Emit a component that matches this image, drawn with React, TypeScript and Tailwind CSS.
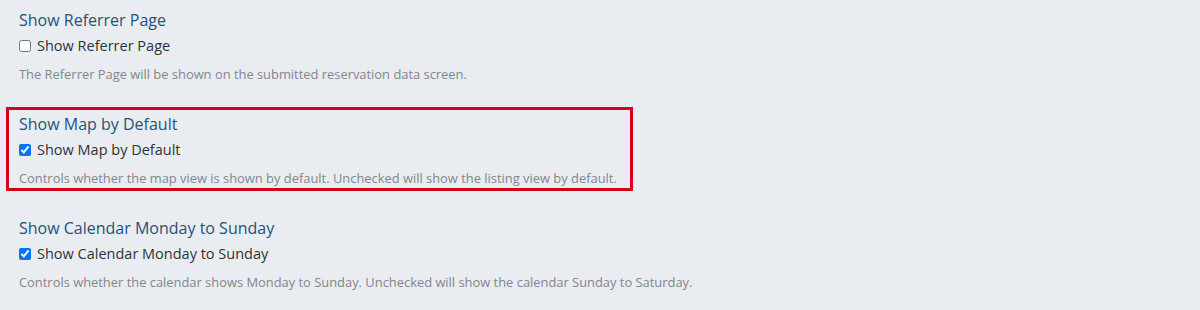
const settings = [
  {
    title: "Show Referrer Page",
    checked: false,
    highlight: false,
    help: "The Referrer Page will be shown on the submitted reservation data screen.",
  },
  {
    title: "Show Map by Default",
    checked: true,
    highlight: true,
    help: "Controls whether the map view is shown by default. Unchecked will show the listing view by default.",
  },
  {
    title: "Show Calendar Monday to Sunday",
    checked: true,
    highlight: false,
    help: "Controls whether the calendar shows Monday to Sunday. Unchecked will show the calendar Sunday to Saturday.",
  },
];

export default function App() {
  return (
    <div
      className="min-h-[310px] w-[1200px] bg-[#e9edf1] pl-[6px] pt-[3px]"
      style={{ fontFamily: "'Open Sans', Lato, sans-serif" }}
    >
      <div className="flex flex-col gap-5">
        {settings.map((s) => (
          <div
            key={s.title}
            className={
              s.highlight
                ? "w-[627px] border-[3px] border-[#d0021b] pl-[10px] pt-1 pb-[1px]"
                : "w-[627px] border-[3px] border-transparent pl-[10px] pt-1 pb-[1px]"
            }
          >
            <h3 className="whitespace-nowrap text-[16px] leading-5 text-[#27507a]">{s.title}</h3>
            <label className="mt-[6px] flex items-center gap-[6px] whitespace-nowrap text-[14.5px] leading-5 text-[#30303f]">
              <input
                type="checkbox"
                defaultChecked={s.checked}
                className="m-0 h-[12px] w-[12px]"
              />
              {s.title}
            </label>
            <p className="mt-[9px] whitespace-nowrap text-[12.9px] leading-[18px] text-[#84848e]">{s.help}</p>
          </div>
        ))}
      </div>
    </div>
  );
}
